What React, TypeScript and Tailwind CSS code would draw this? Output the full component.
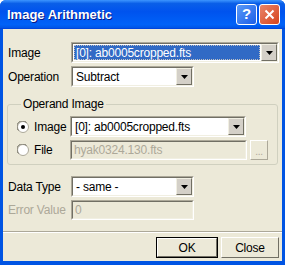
import React from 'react';

const font = { fontFamily: '"Liberation Sans", Arial, sans-serif' };

const Sunken = ({ className = '', children }: { className?: string; children: React.ReactNode }) => (
  <div className={`border border-t-[#aca899] border-l-[#aca899] border-b-white border-r-white ${className}`}>
    <div className="h-full border border-t-[#716f64] border-l-[#716f64] border-b-[#f1efe2] border-r-[#f1efe2]">
      {children}
    </div>
  </div>
);

const ArrowBtn = () => (
  <div className="h-full w-[16px] border border-t-[#f1efe2] border-l-[#f1efe2] border-b-[#716f64] border-r-[#716f64] bg-[#d4d0c8] flex items-center justify-center">
    <svg width="7" height="4" viewBox="0 0 7 4">
      <path d="M0 0h7L3.5 4z" fill="#000" />
    </svg>
  </div>
);

const Combo = ({ value, className = '', selected = false }: { value: string; className?: string; selected?: boolean }) => (
  <Sunken className={`h-[21px] ${className}`}>
    <div className="flex h-full bg-white">
      <div className="flex-1 p-px">
        <div
          className={`h-full flex items-center pl-[2px] whitespace-nowrap ${
            selected ? 'bg-[#316ac5] text-white outline outline-1 outline-dotted outline-[#c0c0c0] -outline-offset-1' : 'text-black'
          }`}
        >
          {value}
        </div>
      </div>
      <ArrowBtn />
    </div>
  </Sunken>
);

const Disabled = ({ value, className = '' }: { value: string; className?: string }) => (
  <Sunken className={`h-[20px] ${className}`}>
    <div className="h-full bg-[#ece9d8] flex items-center pl-[2px] text-[#aca899] whitespace-nowrap">{value}</div>
  </Sunken>
);

const Radio = ({ checked }: { checked?: boolean }) => (
  <svg width="12" height="12" viewBox="0 0 12 12" className="shrink-0">
    <circle cx="6" cy="6" r="5.5" fill="#fff" stroke="#aca899" />
    <path d="M1.5 9.5A5 5 0 0 1 9.5 1.5" fill="none" stroke="#716f64" />
    {checked && <circle cx="6" cy="6" r="2" fill="#000" />}
  </svg>
);

const Button = ({ label, def = false }: { label: string; def?: boolean }) => (
  <div className={`h-[21px] ${def ? 'border border-black' : ''}`}>
    <div className="h-full border border-t-white border-l-white border-b-[#716f64] border-r-[#716f64] bg-[#ece9d8] flex items-center justify-center">
      {label}
    </div>
  </div>
);

export default function App() {
  return (
    <div className="w-[285px] h-[265px] bg-white text-[12px] tracking-[-0.2px]" style={font}>
      <div className="w-full h-full flex flex-col rounded-t-[6px] overflow-hidden bg-[#0054e3]">
        <div className="h-[29px] shrink-0 flex items-center justify-between pl-[7px] pr-[5px] bg-[linear-gradient(to_bottom,#3d95ff,#0a5fe8_12%,#0053ee_40%,#0062f8_85%,#0056e8_95%,#003dd7)]">
          <span className="text-white font-bold text-[13px] tracking-normal [text-shadow:1px_1px_#0a1883]">Image Arithmetic</span>
          <div className="flex gap-[2px]">
            <div className="w-[21px] h-[21px] rounded-[3px] border border-white bg-[linear-gradient(135deg,#5a9af7,#1c5ee8)] flex items-center justify-center text-white font-bold text-[15px]">
              ?
            </div>
            <div className="w-[21px] h-[21px] rounded-[3px] border border-white bg-[linear-gradient(135deg,#e9856a,#d6441c)] flex items-center justify-center">
              <svg width="11" height="11" viewBox="0 0 11 11">
                <path d="M1.5 1.5l8 8M9.5 1.5l-8 8" stroke="#fff" strokeWidth="2" />
              </svg>
            </div>
          </div>
        </div>
        <div className="flex-1 mx-[3px] mb-[4px] bg-[#ece9d8] flex flex-col pl-[5px] pr-[3px] pt-[13px] text-black">
          <div className="flex items-center">
            <span className="w-[63px] whitespace-nowrap">Image</span>
            <Combo value="[0]: ab0005cropped.fts" className="w-[208px]" selected />
          </div>
          <div className="flex items-center mt-[3px]">
            <span className="w-[63px] whitespace-nowrap">Operation</span>
            <Combo value="Subtract" className="w-[123px]" />
          </div>
          <fieldset className="mt-[8px] ml-[-1px] mr-[1px] border border-[#d0d0bf] rounded-[3px] pl-[9px] pr-[4px] pb-[10px] h-[70px]">
            <legend className="ml-[4px] px-[2px]">Operand Image</legend>
            <div className="flex items-center mt-[3px]">
              <Radio checked />
              <span className="w-[41px] pl-[5px] whitespace-nowrap">Image</span>
              <Combo value="[0]: ab0005cropped.fts" className="w-[176px]" />
            </div>
            <div className="flex items-center mt-[3px]">
              <Radio />
              <span className="w-[41px] pl-[5px] whitespace-nowrap">File</span>
              <Disabled value="hyak0324.130.fts" className="w-[177px]" />
              <div className="ml-[3px] w-[18px] h-[20px] border border-t-white border-l-white border-b-[#aca899] border-r-[#aca899] flex items-end justify-center text-[10px] text-[#aca899] leading-[14px]">
                ...
              </div>
            </div>
          </fieldset>
          <div className="flex items-center mt-[11px]">
            <span className="w-[63px] whitespace-nowrap">Data Type</span>
            <Combo value="- same -" className="w-[123px]" />
          </div>
          <div className="flex items-center mt-[3px]">
            <span className="w-[63px] text-[#aca899] whitespace-nowrap">Error Value</span>
            <Disabled value="0" className="w-[123px]" />
          </div>
          <div className="mt-[11px] mr-[-3px] ml-[-5px] border-t border-t-[#aca899] border-b border-b-white" />
          <div className="flex justify-end gap-[3px] mt-[4px]">
            <div className="w-[62px]">
              <Button label="OK" def />
            </div>
            <div className="w-[58px]">
              <Button label="Close" />
            </div>
          </div>
        </div>
      </div>
    </div>
  );
}
